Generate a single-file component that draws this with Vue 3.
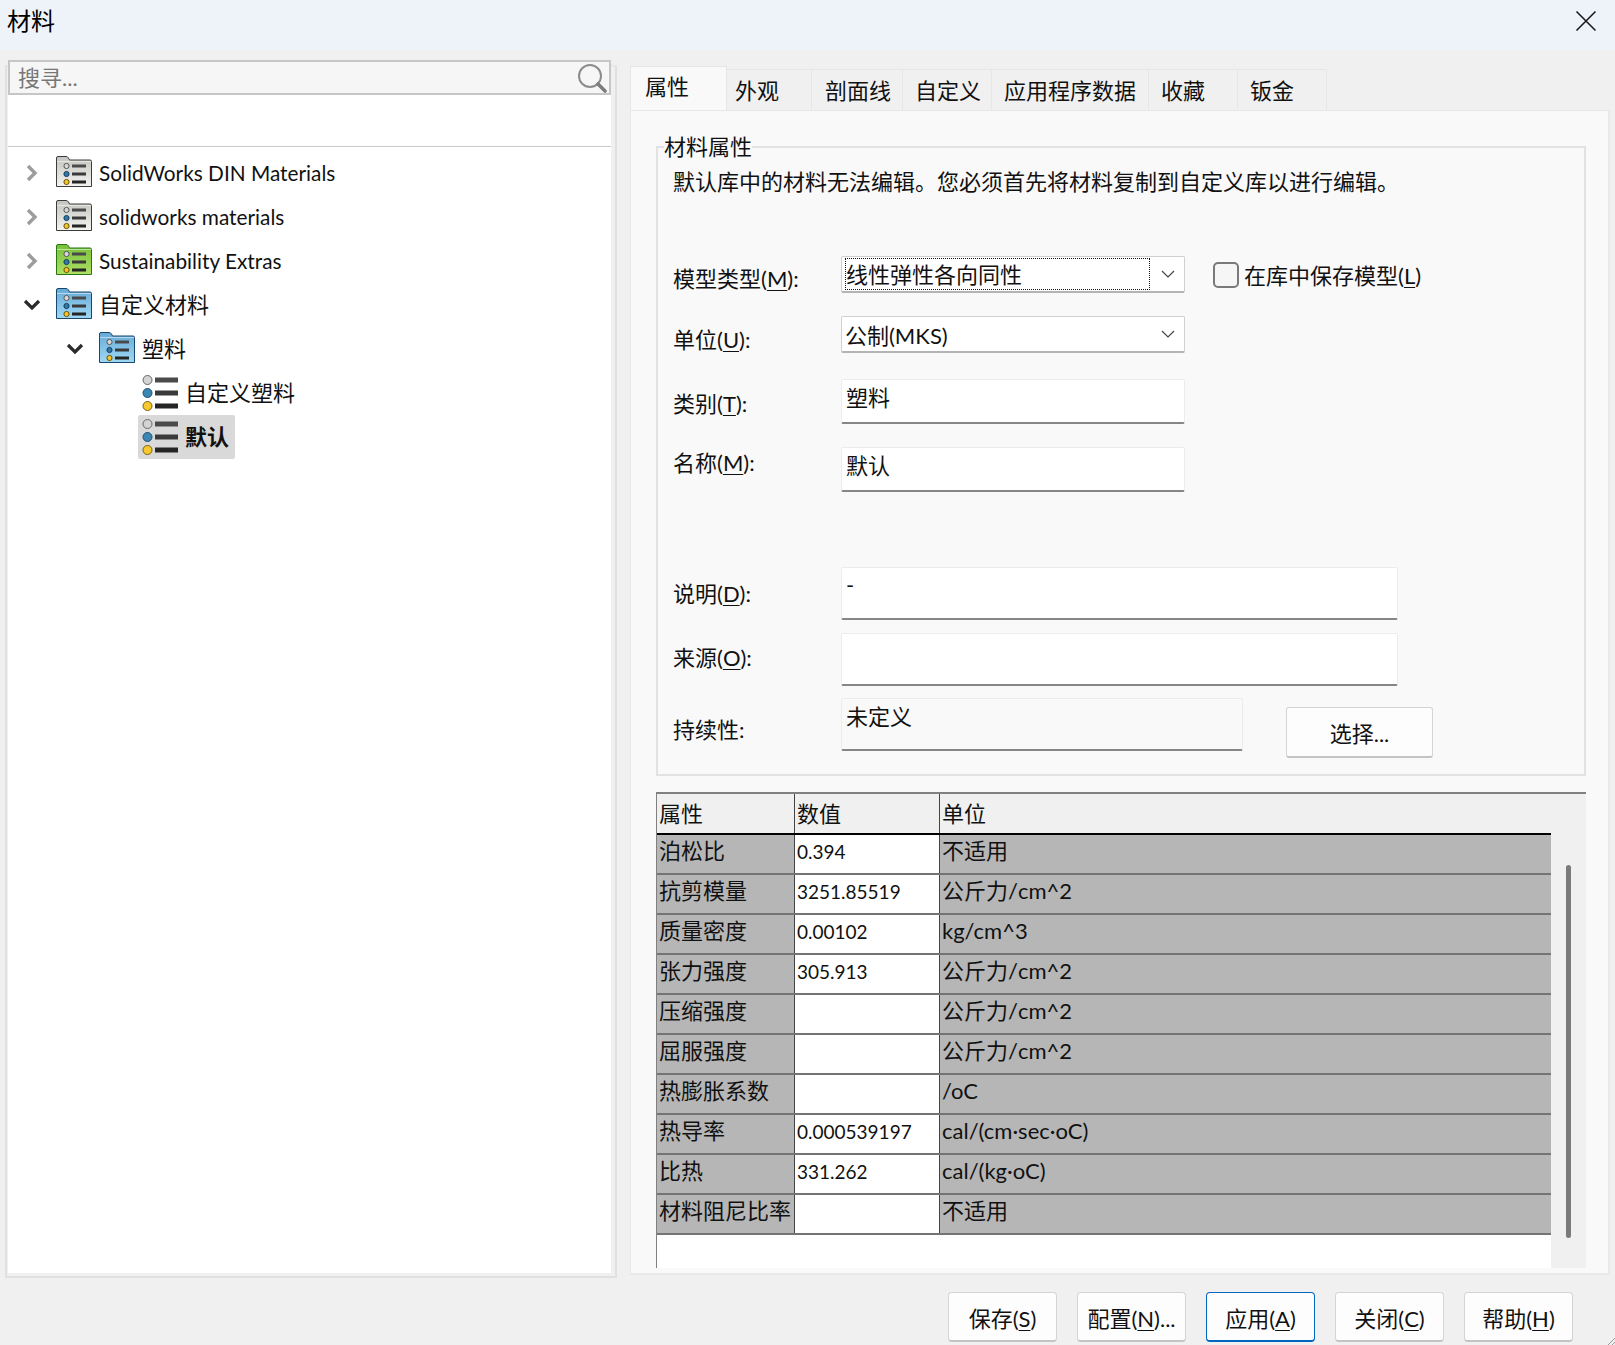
<script setup>
const tabs = ['属性', '外观', '剖面线', '自定义', '应用程序数据', '收藏', '钣金']
const rows = [
  ['泊松比', '0.394', '不适用'],
  ['抗剪模量', '3251.85519', '公斤力/cm^2'],
  ['质量密度', '0.00102', 'kg/cm^3'],
  ['张力强度', '305.913', '公斤力/cm^2'],
  ['压缩强度', '', '公斤力/cm^2'],
  ['屈服强度', '', '公斤力/cm^2'],
  ['热膨胀系数', '', '/oC'],
  ['热导率', '0.000539197', 'cal/(cm·sec·oC)'],
  ['比热', '331.262', 'cal/(kg·oC)'],
  ['材料阻尼比率', '', '不适用'],
]
const tree = [
  { label: 'SolidWorks DIN Materials', kind: 'gray', level: 0, open: false, latin: true },
  { label: 'solidworks materials', kind: 'gray', level: 0, open: false, latin: true },
  { label: 'Sustainability Extras', kind: 'green', level: 0, open: false, latin: true },
  { label: '自定义材料', kind: 'blue', level: 0, open: true },
  { label: '塑料', kind: 'blue', level: 1, open: true },
  { label: '自定义塑料', kind: 'leaf', level: 2 },
  { label: '默认', kind: 'leaf', level: 2, selected: true },
]
const folderColors = {
  gray: ['#c4c4bf', '#f3f3ef', '#3c3c3c'],
  green: ['#76c038', '#aee065', '#2b7412'],
  blue: ['#66aad8', '#9fd8f3', '#17466e'],
}
const buttons = [
  { pre: '保存(', key: 'S', post: ')' },
  { pre: '配置(', key: 'N', post: ')...' },
  { pre: '应用(', key: 'A', post: ')', primary: true },
  { pre: '关闭(', key: 'C', post: ')' },
  { pre: '帮助(', key: 'H', post: ')' },
]
</script>

<template>
  <div class="win">
    <header class="titlebar">
      <span class="title">材料</span>
      <svg class="close" width="22" height="22" viewBox="0 0 22 22"><path d="M1.500 1.500 20.500 20.500M20.500 1.500 1.500 20.500" stroke="#1a1a1a" stroke-width="1.600" fill="none" /></svg>
    </header>
    <div class="body">
      <aside class="left">
        <div class="leftinner">
          <div class="search">
            <span class="ph">搜寻...</span>
            <svg width="30" height="30" viewBox="0 0 30 30"><circle cx="13" cy="13" r="11" fill="none" stroke="#8c8c8c" stroke-width="2" /><path d="M21 21l7 7" stroke="#7d7d7d" stroke-width="3.600" stroke-linecap="round" /></svg>
          </div>
          <div class="tree-gap"></div>
          <div class="tree">
            <div v-for="n in tree" :key="n.label" class="node" :class="'lv' + n.level">
              <span class="arrow">
                <svg v-if="n.open === false" width="14" height="18" viewBox="0 0 14 18"><path d="M3 2l7 7-7 7" fill="none" stroke="#9c9c9c" stroke-width="3.400" /></svg>
                <svg v-else-if="n.open" width="18" height="12" viewBox="0 0 18 12"><path d="M2 2l7 7 7-7" fill="none" stroke="#2b2b2b" stroke-width="3.200" /></svg>
              </span>
              <span class="item" :class="{ sel: n.selected, isleaf: n.kind === 'leaf' }">
                <svg v-if="n.kind !== 'leaf'" class="ico folder" width="36" height="31" viewBox="0 0 36 31">
                  <defs>
                    <linearGradient :id="'g' + n.kind" x1="0" y1="0" x2="0" y2="1">
                      <stop offset="0" :stop-color="folderColors[n.kind][0]" />
                      <stop offset="1" :stop-color="folderColors[n.kind][1]" />
                    </linearGradient>
                  </defs>
                  <path d="M.5 30.500V2q0-1.500 1.500-1.500h8q1.500 0 2.500 1.500l1 2H34q1.500 0 1.500 1.500v25z" :fill="'url(#g' + n.kind + ')'" :stroke="folderColors[n.kind][2]" />
                  <path d="M1 5.500h34" stroke="#ffffff" stroke-opacity=".5" fill="none" />
                  <circle cx="10.500" cy="10" r="2.600" fill="#d8d8d8" stroke="#555" />
                  <circle cx="10.500" cy="18" r="2.600" fill="#2f78a8" stroke="#17405e" />
                  <circle cx="10.500" cy="26" r="2.600" fill="#f4c430" stroke="#6a5200" />
                  <rect x="16" y="8.500" width="14" height="3" fill="#4a4a4a" />
                  <rect x="16" y="16.500" width="14" height="3" fill="#3a3a3a" />
                  <rect x="16" y="24.500" width="14" height="3" fill="#252525" />
                </svg>
                <svg v-else class="ico" width="36" height="36" viewBox="0 0 36 36">
                  <circle cx="5.500" cy="5" r="4.500" fill="#d4d4d4" stroke="#666" />
                  <circle cx="5.500" cy="18" r="4.500" fill="#3c86b4" stroke="#1e4f70" />
                  <circle cx="5.500" cy="31" r="4.500" fill="#f7c92f" stroke="#7a6010" />
                  <rect x="13" y="2.500" width="23" height="5" fill="#4a4a4a" />
                  <rect x="13" y="15.500" width="23" height="5" fill="#3a3a3a" />
                  <rect x="13" y="28.500" width="23" height="5" fill="#252525" />
                </svg>
                <span class="lab" :class="{ strong: n.selected, latin: n.latin }">{{ n.label }}</span>
              </span>
            </div>
          </div>
        </div>
      </aside>

      <main class="right">
        <nav class="tabs">
          <span v-for="(t, i) in tabs" :key="t" class="tab" :class="['t' + i, { active: i === 0 }]">{{ t }}</span>
        </nav>
        <section class="panel">
          <fieldset class="group">
            <legend>材料属性</legend>
            <p class="note">默认库中的材料无法编辑。您必须首先将材料复制到自定义库以进行编辑。</p>

            <div class="f f-model">
              <label>模型类型(<u>M</u>):</label>
              <div class="combo">
                <span class="focus">线性弹性各向同性</span>
                <svg width="14" height="9" viewBox="0 0 14 9"><path d="M1 1l6 6 6-6" fill="none" stroke="#444" stroke-width="1.200" /></svg>
              </div>
              <span class="check"></span>
              <span class="checklab">在库中保存模型(<u>L</u>)</span>
            </div>

            <div class="f f-unit">
              <label>单位(<u>U</u>):</label>
              <div class="combo plain">
                <span>公制(MKS)</span>
                <svg width="14" height="9" viewBox="0 0 14 9"><path d="M1 1l6 6 6-6" fill="none" stroke="#444" stroke-width="1.200" /></svg>
              </div>
            </div>

            <div class="f f-cat">
              <label>类别(<u>T</u>):</label>
              <div class="input short">塑料</div>
            </div>
            <div class="f f-name">
              <label>名称(<u>M</u>):</label>
              <div class="input short">默认</div>
            </div>
            <div class="f f-desc">
              <label>说明(<u>D</u>):</label>
              <div class="input long">-</div>
            </div>
            <div class="f f-src">
              <label>来源(<u>O</u>):</label>
              <div class="input long"></div>
            </div>
            <div class="f f-sus">
              <label>持续性:</label>
              <div class="input sus">未定义</div>
              <button class="pick">选择...</button>
            </div>
          </fieldset>

          <div class="tablewrap">
            <div class="grid">
              <div class="tr th">
                <div class="c1">属性</div><div class="c2">数值</div><div class="c3">单位</div>
              </div>
              <div v-for="r in rows" :key="r[0]" class="tr">
                <div class="c1">{{ r[0] }}</div><div class="c2">{{ r[1] }}</div><div class="c3">{{ r[2] }}</div>
              </div>
            </div>
            <div class="scroll"><span class="thumb"></span></div>
          </div>
        </section>
      </main>
    </div>
    <footer class="foot">
      <button v-for="b in buttons" :key="b.key" class="btn" :class="{ primary: b.primary }">{{ b.pre }}<u>{{ b.key }}</u>{{ b.post }}</button>
    </footer>
    <svg class="grip" width="8" height="8" viewBox="0 0 8 8"><path d="M8 1 1 8M8 5 5 8" stroke="#9a9a9a" fill="none" /></svg>
  </div>
</template>

<style>
html, body { margin: 0; padding: 0; background: #f0f0f0; }
</style>

<style scoped>
.win {
  position: relative;
  width: 1615px;
  height: 1345px;
  background: #f0f0f0;
  color: #111;
  font-family: Lato, "Noto Sans CJK SC", sans-serif;
  font-size: 22px;
  display: flex;
  flex-direction: column;
  overflow: hidden;
  box-sizing: border-box;
}
.titlebar {
  height: 50px;
  flex: none;
  background: #eef3fa;
  display: flex;
  align-items: center;
  justify-content: space-between;
  padding: 0 18px 8px 7px;
  box-sizing: border-box;
}
.title { font-size: 24px; line-height: 42px; color: #000; }
.body { height: 1228px; flex: none; display: flex; }
.left {
  width: 612px;
  height: 1213px;
  margin: 15px 0 0 5px;
  padding: 0 4px 3px 1px;
  box-sizing: border-box;
  background: #f0f0f0;
  border: 2px solid #e0e0e0;
  border-top-color: #e8e8e8;
  flex: none;
}
.leftinner { height: 100%; background: #fff; }
.search {
  position: relative;
  top: -7px;
  margin-bottom: -7px;
  height: 35px;
  box-sizing: border-box;
  background: #f6f6f6;
  border: 2px solid #c6c6c6;
  display: flex;
  align-items: center;
  justify-content: space-between;
  padding: 0 2px 0 8px;
}
.ph { color: #777; line-height: 32px; }
.tree-gap { height: 51px; border-bottom: 1px solid #c9c9c9; }
.tree { padding-top: 4px; }
.node { height: 44px; display: flex; align-items: center; padding-left: 8px; }
.lv1 { padding-left: 51px; }
.lv2 { padding-left: 94px; }
.arrow { width: 32px; display: flex; justify-content: center; margin-right: 8px; flex: none; }
.item { display: flex; align-items: center; height: 44px; }
.ico { flex: none; margin-right: 7px; }
.folder { position: relative; top: -2px; }
.isleaf { margin-left: -4px; padding: 0 6px 0 4px; border-radius: 2px; }
.sel { background: #d9d9d9; }
.lab { font-size: 22px; line-height: 32px; white-space: nowrap; }
.lab.latin { font-size: 20.8px; }
.lab.strong { font-weight: 700; }

.right { width: 980px; margin-left: 13px; flex: none; display: flex; flex-direction: column; }
.tabs { height: 60px; flex: none; display: flex; align-items: flex-end; }
.tab {
  height: 41px;
  box-sizing: border-box;
  border: 1px solid #e6e6e6;
  border-width: 1px 1px 0 0;
  display: flex;
  align-items: center;
  padding-left: 8px;
  padding-top: 2px;
  background: #f0f0f0;
  line-height: 38px;
}
.tab.active {
  height: 44px;
  width: 97px;
  background: #f9f9f9;
  border-left: 1px solid #e6e6e6;
  padding: 0 0 4px 14px;
}
.t1 { width: 85px; }
.t2 { width: 91px; padding-left: 13px; }
.t3 { width: 89px; padding-left: 12px; }
.t4 { width: 157px; padding-left: 12px; }
.t5 { width: 89px; padding-left: 12px; }
.t6 { width: 89px; padding-left: 12px; }
.panel {
  height: 1165px;
  box-sizing: border-box;
  background: #f9f9f9;
  border: 2px solid #e9e9e9;
  border-top: 1px solid #e6e6e6;
  border-left: 1px solid #e9e9e9;
  padding: 0 22px 6px 25px;
  display: flex;
  flex-direction: column;
}
.group {
  margin: 20px 0 0;
  padding: 0;
  height: 645px;
  box-sizing: border-box;
  border: 2px solid #e2e2e2;
  min-width: 0;
  flex: none;
}
legend {
  margin-left: 6px;
  padding: 0;
  line-height: 32px;
}
.note { margin: 2px 0 0 15px; line-height: 34px; white-space: nowrap; }
.f { display: flex; align-items: flex-start; }
.f label { width: 168px; margin-left: 15px; flex: none; line-height: 32px; white-space: nowrap; }
.f u, .foot u { text-underline-offset: 3px; text-decoration-thickness: 1px; }
.f-model { margin-top: 57px; height: 36px; }
.f-model label { margin-top: 7px; }
.combo {
  width: 344px;
  height: 37px;
  box-sizing: border-box;
  background: #fff;
  border: 1px solid #d0d0d0;
  border-bottom: 2px solid #b4b4b4;
  border-radius: 2px;
  display: flex;
  align-items: center;
  justify-content: space-between;
  padding: 0 9px 0 3px;
  flex: none;
}
.focus {
  width: 305px;
  height: 32px;
  box-sizing: border-box;
  border: 1px dotted #111;
  line-height: 32px;
  padding-left: 0;
}
.check {
  width: 26px;
  height: 26px;
  box-sizing: border-box;
  margin: 6px 5px 0 28px;
  border: 2px solid #7a7a7a;
  border-radius: 5px;
  background: #f6f6f6;
  flex: none;
}
.checklab { line-height: 34px; margin-top: 3px; white-space: nowrap; }
.f-unit { margin-top: 24px; }
.f-unit label { margin-top: 8px; }
.f-cat { margin-top: 23px; }
.f-cat label { margin-top: 9px; }
.input {
  box-sizing: border-box;
  background: #fff;
  border: 1px solid #ececec;
  border-bottom: 2px solid #868686;
  border-radius: 2px;
  padding-left: 4px;
  line-height: 36px;
  flex: none;
  white-space: nowrap;
}
.short { width: 344px; height: 45px; }
.f-name { margin-top: 23px; }
.f-name label { margin-top: 0; }
.f-desc { margin-top: 75px; }
.f-desc label { margin-top: 11px; }
.long { width: 557px; height: 53px; line-height: 34px; }
.f-src { margin-top: 13px; }
.f-src label { margin-top: 9px; }
.f-sus { margin-top: 12px; }
.f-sus label { margin-top: 16px; }
.sus { width: 402px; height: 53px; background: #f9f9f9; }
.pick {
  width: 147px;
  height: 51px;
  margin: 9px 0 0 43px;
  background: #fdfdfd;
  border: 1px solid #d4d4d4;
  border-bottom: 2px solid #c4c4c4;
  border-radius: 3px;
  font: inherit;
  color: inherit;
  padding: 0;
  flex: none;
}
.tablewrap {
  margin-top: 16px;
  height: 476px;
  flex: none;
  display: flex;
  box-sizing: border-box;
  border-top: 2px solid #808080;
}
.grid { width: 895px; flex: none; background: #fff; border-left: 1px solid #808080; box-sizing: border-box; }
.tr { display: flex; height: 40px; box-sizing: border-box; border-bottom: 2px solid #747474; background: #b6b6b6; line-height: 31px; white-space: nowrap; }
.tr.th { height: 41px; background: #f0f0f0; border-bottom-color: #000; line-height: 40px; }
.c1, .c2, .c3 { box-sizing: border-box; padding-left: 2px; height: 100%; overflow: hidden; }
.c1 { width: 137px; }
.c2 { width: 145px; border-left: 1px solid #444; background: #fff; font-size: 19px; line-height: 33px; }
.c3 { flex: 1; border-left: 1px solid #444; padding-left: 2px; }
.th .c2 { background: #f0f0f0; font-size: 22px; line-height: 40px; }
.scroll { flex: 1; background: #f0f0f0; position: relative; }
.thumb { position: absolute; left: 15px; top: 71px; width: 5px; height: 373px; border-radius: 3px; background: #7a7a7a; }
.foot { flex: none; height: 67px; display: flex; justify-content: flex-end; align-items: flex-end; gap: 20px; padding: 0 42px 3px 0; box-sizing: border-box; }
.btn {
  width: 109px;
  height: 50px;
  box-sizing: border-box;
  background: #fdfdfd;
  border: 1px solid #d4d4d4;
  border-bottom: 2px solid #c4c4c4;
  border-radius: 4px;
  font: inherit;
  color: inherit;
  padding: 0;
  white-space: nowrap;
}
.btn.primary { border-color: #0067c0; border-bottom-color: #0067c0; }
.grip { position: absolute; right: 0; bottom: 0; }
</style>
